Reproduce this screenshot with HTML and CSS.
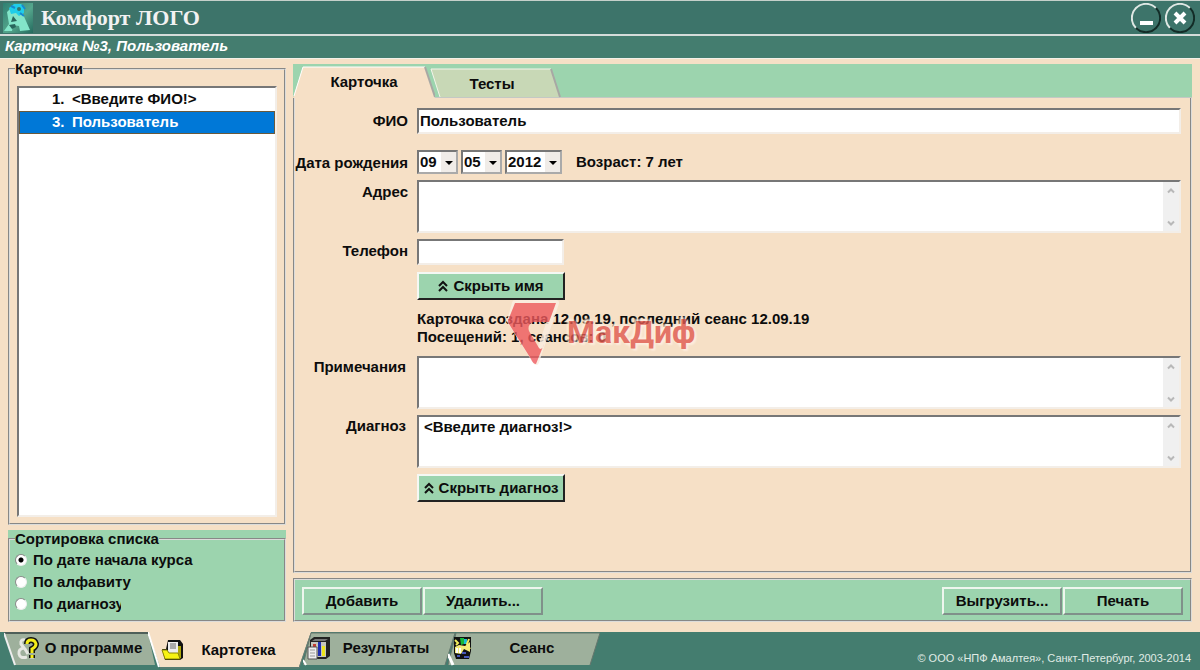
FILE: index.html
```html
<!DOCTYPE html>
<html lang="ru">
<head>
<meta charset="utf-8">
<title>Комфорт ЛОГО</title>
<link rel="stylesheet" href="styles.css">
</head>
<body>
<header class="titlebar">
  <svg class="app-logo" viewBox="0 0 30 30" aria-hidden="true">
    <defs><linearGradient id="lg" x1="0" y1="0" x2="1" y2="1"><stop offset="0" stop-color="#2f7f72"/><stop offset=".55" stop-color="#55a68c"/><stop offset="1" stop-color="#246a5e"/></linearGradient></defs>
    <rect width="30" height="30" fill="url(#lg)"/>
    <path d="M4 9 9 4 19 9 27 27 17 28 16 23 10 22 9 28 1 28 6 21Z" fill="#83e5c9"/>
    <path d="M10 13 14 18 8 19ZM6 22 12 21 13 24 9 26Z" fill="#28665c"/>
    <path d="M6 5 11 1 18 1 21 4 21 10 16 13 13 10 8 11Z" fill="#20cde9"/>
    <path d="M8 3 12 5M19 2 22 6M17 10 21 13" stroke="#1689cf" stroke-width="2" fill="none"/>
    <circle cx="16" cy="6" r="2" fill="#35776d"/>
  </svg>
  <h1 class="app-title">Комфорт ЛОГО</h1>
  <div class="window-controls">
    <button class="round" aria-label="Свернуть"><svg viewBox="0 0 30 30"><path d="M5 25A14 14 0 0 1 25 5" class="lit"/><path d="M25 5A14 14 0 0 1 5 25" class="shade"/><path d="M9 20H22" stroke="#fff" stroke-width="4"/></svg></button>
    <button class="round" aria-label="Закрыть"><svg viewBox="0 0 30 30"><path d="M5 25A14 14 0 0 1 25 5" class="lit"/><path d="M25 5A14 14 0 0 1 5 25" class="shade"/><path d="M10 10 20 20M20 10 10 20" stroke="#fff" stroke-width="4"/></svg></button>
  </div>
</header>
<div class="subtitle">Карточка №3, Пользователь</div>

<main class="workspace">
  <aside class="sidebar">
    <fieldset class="group cards">
      <legend>Карточки</legend>
      <ul class="card-list">
        <li><span class="num">1.</span>&lt;Введите ФИО!&gt;</li>
        <li class="selected"><span class="num">3.</span>Пользователь</li>
      </ul>
    </fieldset>
    <div class="sort-panel">
      <fieldset class="group sort">
        <legend>Сортировка списка</legend>
        <label><input type="radio" name="sort" checked><span>По дате начала курса</span></label>
        <label><input type="radio" name="sort"><span>По алфавиту</span></label>
        <label><input type="radio" name="sort"><span class="cut">По диагнозу</span></label>
      </fieldset>
    </div>
  </aside>

  <section class="content">
    <nav class="tabs">
      <button class="tab tab-current"><svg viewBox="0 0 142 34" preserveAspectRatio="none"><path d="M0 34 10 3H132L142 34Z" fill="#f6e0c6"/><path d="M1 32 10 3H132" fill="none" stroke="#fff" stroke-width="1"/><path d="M132 3 142 33" fill="none" stroke="#a8a8a4" stroke-width="2"/></svg><span>Карточка</span></button>
      <button class="tab tab-tests"><svg viewBox="0 0 132 34" preserveAspectRatio="none"><path d="M10 33 1 5H121L130 33Z" fill="#c8d8b6"/><path d="M10 33 1 5H121" fill="none" stroke="#f4f4ea" stroke-width="1"/><path d="M121 5 130 33" fill="none" stroke="#a8a8a4" stroke-width="2"/></svg><span>Тесты</span></button>
    </nav>
    <form class="card-form">
      <label class="caption mid" for="fio">ФИО</label>
      <input class="sunken" id="fio" value="Пользователь">

      <label class="caption mid" for="day">Дата рождения</label>
      <div class="birth">
        <span class="pick"><select id="day"><option>09</option></select><svg viewBox="0 0 15 20"><rect width="15" height="20" fill="#f0ece8"/><path d="M4 9H12L8 13Z"/></svg></span>
        <span class="pick"><select aria-label="Месяц"><option>05</option></select><svg viewBox="0 0 15 20"><rect width="15" height="20" fill="#f0ece8"/><path d="M4 9H12L8 13Z"/></svg></span>
        <span class="pick year"><select aria-label="Год"><option>2012</option></select><svg viewBox="0 0 15 20"><rect width="15" height="20" fill="#f0ece8"/><path d="M4 9H12L8 13Z"/></svg></span>
        <span class="age">Возраст: 7 лет</span>
      </div>

      <label class="caption" for="addr">Адрес</label>
      <div class="memo sunken"><textarea id="addr"></textarea><svg viewBox="0 0 16 48"><path d="M5 10 8 7 11 10M5 39 8 42 11 39"/></svg></div>

      <label class="caption" for="phone">Телефон</label>
      <input class="sunken phone" id="phone">

      <button type="button" class="raised"><svg viewBox="0 0 10 12"><path d="M1 6 5 2 9 6M1 11 5 7 9 11"/></svg>Скрыть имя</button>

      <p class="summary">Карточка создана 12.09.19, последний сеанс 12.09.19<br>Посещений: 1, сеансов: 0
        <span class="watermark"><svg viewBox="0 0 56 68"><path d="M8 5H49L29 64 3 23Z" fill="none" stroke="#fbeee2" stroke-width="6" stroke-linejoin="round"/><path d="M8 5H49L42 24H26Q20 27 22 33L32 50Q35 53 37 46L29 66Q26 66 24 61L2 26Q0 23 2 20Z" fill="#ee5a5e"/></svg><span>МакДиф</span></span>
      </p>

      <label class="caption inset" for="notes">Примечания</label>
      <div class="memo sunken"><textarea id="notes"></textarea><svg viewBox="0 0 16 48"><path d="M5 10 8 7 11 10M5 39 8 42 11 39"/></svg></div>

      <label class="caption inset" for="diag">Диагноз</label>
      <div class="memo sunken"><textarea id="diag">&lt;Введите диагноз!&gt;</textarea><svg viewBox="0 0 16 48"><path d="M5 10 8 7 11 10M5 39 8 42 11 39"/></svg></div>

      <button type="button" class="raised"><svg viewBox="0 0 10 12"><path d="M1 6 5 2 9 6M1 11 5 7 9 11"/></svg>Скрыть диагноз</button>
    </form>
    <div class="actions">
      <button class="flat">Добавить</button>
      <button class="flat">Удалить...</button>
      <span class="spacer"></span>
      <button class="flat">Выгрузить...</button>
      <button class="flat">Печать</button>
    </div>
  </section>
</main>

<footer class="bottom">
  <nav class="modes">
    <button class="mode about"><svg class="shape" viewBox="0 0 152 38" preserveAspectRatio="none"><path d="M0 1H144L151 33H11Z" fill="#9eb09c"/><path d="M0 1H144" stroke="#4f5f59" stroke-width="2"/><path d="M0 1 11 33" stroke="#eee" stroke-width="2"/></svg>
      <svg class="icon" viewBox="0 0 24 24"><path d="M9 4Q4 3 5 8L8 12Q2 13 3 18T11 21M9 13 12 18M14 21H18" stroke="#e6e8e2" stroke-width="3" fill="none"/><path d="M11 8Q11 4 15 4T20 8Q20 11 16 13V17M16 19V22" fill="none" stroke="#111" stroke-width="6"/><path d="M11 8Q11 4 15 4T20 8Q20 11 16 13V17M16 19V22" fill="none" stroke="#f4ee19" stroke-width="3"/></svg><span>О программе</span></button>
    <button class="mode files"><svg class="shape" viewBox="0 0 163 38" preserveAspectRatio="none"><path d="M0 0H163L151 35H12Z" fill="#f6e0c6"/><path d="M0 0 11 35" stroke="#fff" stroke-width="2"/><path d="M12 36H151L163 1" stroke="#6e7d74" stroke-width="1" fill="none"/></svg>
      <svg class="icon" viewBox="0 0 24 24"><path d="M8 2H20L23 6V20L20 22H5L2 11H6Z" fill="#111"/><path d="M8 4H18V15H8Z" fill="#eee"/><path d="M10 6H16M10 8H16M10 10H16" stroke="#666"/><path d="M18 8H21V20H18Z" fill="#ada70c"/><path d="M2 12H7L9 15H18L20 21H5Z" fill="#f7f313" stroke="#8c8705"/></svg><span>Картотека</span></button>
    <button class="mode results"><svg class="shape" viewBox="0 0 152 38" preserveAspectRatio="none"><path d="M8 1H152L142 33H0Z" fill="#9eb09c"/><path d="M0 33 8 1H152L142 33" stroke="#66766d" stroke-width="1" fill="none"/><path d="M0 28 3 33" stroke="#fff" stroke-width="2"/></svg>
      <svg class="icon" viewBox="0 0 24 24"><path d="M3 4 7 1H23V20L19 23H3Z" fill="#222"/><path d="M4 6H19V21H4Z" fill="#c6c6bd"/><path d="M5 5 8 3H21L18 5Z" fill="#777"/><path d="M11 6H14V20H11Z" fill="#202fb0"/><path d="M15 10H18V20H15Z" fill="#ece51b"/><path d="M6 8H9V12H6Z" fill="#c43b31"/><path d="M1 11H10V23H1Z" fill="#eee" stroke="#555"/><path d="M3 14H8M3 17H8M3 20H8" stroke="#999"/></svg><span>Результаты</span></button>
    <button class="mode session"><svg class="shape" viewBox="0 0 152 38" preserveAspectRatio="none"><path d="M8 1H152L142 33H0Z" fill="#9eb09c"/><path d="M0 33 8 1H152L142 33" stroke="#66766d" stroke-width="1" fill="none"/><path d="M0 22 5 33" stroke="#fff" stroke-width="3"/></svg>
      <svg class="icon" viewBox="0 0 24 24"><path d="M2 1H19V15L17 23H4L2 17Z" fill="#111"/><path d="M8 2H12V8L9 9Z" fill="#16b939"/><path d="M12 3H15V8H12Z" fill="#1dbfd0"/><path d="M3 4 6 7 4 9M17 3 15 8 18 13" stroke="#f1ed5c" stroke-width="2" fill="none"/><path d="M3 11 7 9 13 10 18 6V16L12 13 9 18 3 17Z" fill="#f3ec78"/><path d="M5 12V17M8 12V17" stroke="#fff" stroke-width="2"/><path d="M5 20H8M10 17H14M12 21H17" stroke="#4658b7" stroke-width="2"/></svg><span>Сеанс</span></button>
  </nav>
  <small class="copyright">© ООО «НПФ Амалтея», Санкт-Петербург, 2003-2014</small>
</footer>
</body>
</html>
```
FILE: styles.css
```css
* { box-sizing: border-box; }
body {
  margin: 0;
  min-height: 100vh;
  display: flex;
  flex-direction: column;
  background: #f6e0c6;
  color: #0c0c0c;
  font: bold 15px/18px "Liberation Sans", Arial, sans-serif;
}
button, input, select, textarea { font: inherit; color: inherit; border-radius: 0; margin: 0; }
button { cursor: pointer; }
svg { display: block; }

.titlebar {
  display: flex;
  align-items: center;
  height: 36px;
  padding: 0 5px 0 3px;
  background: #3d746a;
  border-top: 1px solid #c5d0ca;
  border-bottom: 2px solid #d5dcda;
}
.app-logo { width: 30px; height: 30px; }
.app-title {
  margin: 0 0 0 8px;
  color: #f2f2f2;
  font: bold 22px/30px "Liberation Serif", "Times New Roman", serif;
}
.window-controls { display: flex; gap: 4px; margin-left: auto; }
.round { width: 30px; height: 30px; padding: 0; border: 0; background: none; }
.round path { fill: none; }
.lit { stroke: #dfe8e4; stroke-width: 2; }
.shade { stroke: #132c27; stroke-width: 2; }
.subtitle {
  height: 23px;
  padding: 1px 5px;
  background: #447d6f;
  border-bottom: 1px solid #f4f0e8;
  color: #fff;
  font-style: italic;
}

.workspace { flex: 1; display: flex; gap: 7px; padding: 1px 8px 10px 8px; }
.sidebar { display: flex; flex-direction: column; gap: 5px; width: 278px; }
.group { margin: 0; border: 2px groove #dcdcda; min-width: 0; }
.group legend { margin: 0; padding: 0; }
.cards { flex: 1; display: flex; padding: 8px 7px 6px; }
.cards legend { margin-left: -2px; }
.card-list {
  flex: 1;
  margin: 0;
  padding: 0;
  list-style: none;
  background: #fff;
  border: 2px solid #f3eee8;
  border-top-color: #777;
  border-left-color: #777;
}
.card-list li { height: 23px; padding: 1px 0; line-height: 20px; display: flex; }
.num { width: 53px; padding-left: 33px; flex: none; }
.selected { background: #0078d7; color: #fff; outline: 1px solid #6a5a3c; outline-offset: -1px; }
.sort-panel { background: #9cd4ae; }
.sort { padding: 3px 5px 7px; display: grid; gap: 4px; }
.sort label { display: flex; align-items: center; gap: 6px; height: 18px; }
.sort input {
  appearance: none;
  width: 12px;
  height: 12px;
  border: 1px solid #8a8a8a;
  border-right-color: #eee;
  border-bottom-color: #eee;
  border-radius: 50%;
  background: #fff;
}
.sort input:checked { background: radial-gradient(circle, #000 0 2px, #fff 3px); }
.cut { width: 88px; overflow: hidden; white-space: nowrap; }

.content { flex: 1; min-width: 0; display: flex; flex-direction: column; margin-top: 4px; }
.tabs { display: flex; height: 34px; background: #9cd4ae; border-bottom: 1px solid #c4c8c4; }
.tab { position: relative; height: 34px; padding: 2px 0 0; border: 0; background: none; }
.tab svg { position: absolute; inset: 0; width: 100%; height: 100%; }
.tab span { position: relative; }
.tab-current { width: 142px; z-index: 1; }
.tab-tests { width: 132px; margin-left: -5px; padding: 5px 8px 0 0; }
.card-form {
  flex: 1;
  display: grid;
  grid-template-columns: 113px 1fr;
  column-gap: 9px;
  align-content: start;
  justify-items: start;
  padding: 10px 9px 60px 0;
  border: 2px groove #dcdcda;
  border-top: 0;
}
.card-form > * { margin-bottom: 6px; }
.caption { justify-self: end; padding-top: 3px; white-space: nowrap; }
.mid { padding-top: 4px; }
.inset { padding-right: 2px; padding-top: 2px; }
.sunken { background: #fff; border: 2px solid #f3eee8; border-top-color: #777; border-left-color: #777; }
input.sunken { width: 100%; height: 26px; padding: 0 1px 2px; }
#fio { margin-bottom: 16px; }
input.phone { width: 147px; margin-bottom: 7px; }
.birth { display: flex; gap: 3px; }
.pick { position: relative; width: 41px; height: 24px; }
.year { width: 57px; }
.pick select { appearance: none; width: 100%; height: 100%; padding: 0 1px; border: 2px solid #aaa; border-top-color: #777; border-left-color: #777; background: #fff; }
.pick svg { position: absolute; top: 2px; right: 2px; width: 15px; height: 20px; pointer-events: none; }
.age { margin-left: 11px; padding-top: 3px; }
.memo { display: flex; width: 100%; height: 53px; }
.memo textarea { flex: 1; min-width: 0; resize: none; border: 0; padding: 1px 5px; background: none; overflow: hidden; outline: 0; }
.memo svg { width: 16px; height: 49px; background: #f0f0f0; fill: none; stroke: #b8b8b8; stroke-width: 2; }
.raised {
  grid-column: 2;
  display: flex;
  align-items: center;
  justify-content: center;
  gap: 5px;
  width: 148px;
  height: 28px;
  padding: 0;
  white-space: nowrap;
  background: #9cd4ae;
  border: 2px solid #222;
  border-top-color: #f4f8f4;
  border-left-color: #f4f8f4;
}
.raised svg { width: 10px; height: 12px; fill: none; stroke: #111; stroke-width: 2; }
.summary { grid-column: 2; position: relative; margin: 4px 0 10px; }
.watermark { position: absolute; left: 90px; top: -12px; display: flex; align-items: center; gap: 4px; opacity: 0.8; pointer-events: none; }
.watermark svg { width: 56px; height: 68px; }
.watermark span {
  color: #e05a50;
  font: bold 32px/40px Roboto, sans-serif;
  text-shadow: 0 0 3px #fff0e4, 2px 2px 2px #fff0e4, -2px -2px 2px #fff0e4;
}

.actions {
  display: flex;
  gap: 1px;
  height: 44px;
  margin-top: 5px;
  padding: 7px 7px;
  background: #9cd4ae;
  border: 2px groove #dcdcda;
}
.spacer { flex: 1; }
.flat { width: 120px; height: 28px; padding: 0; background: #9cd4ae; border: 2px solid #80908a; border-top-color: #eef6ee; border-left-color: #eef6ee; }

.bottom { display: flex; justify-content: space-between; align-items: flex-start; height: 38px; background: #447d6f; }
.modes { display: flex; padding-left: 4px; }
.mode { position: relative; display: flex; align-items: center; height: 38px; padding: 0 0 6px; border: 0; background: none; }
.shape { position: absolute; inset: 0; width: 100%; height: 100%; }
.shape path:not([fill]) { fill: none; }
.icon { position: relative; width: 24px; height: 24px; flex: none; }
.mode span { position: relative; flex: 1; text-align: center; }
.about { width: 152px; padding-left: 12px; padding-right: 9px; }
.files { width: 163px; margin-left: -8px; padding-left: 12px; padding-right: 18px; padding-bottom: 2px; z-index: 1; }
.results { width: 152px; margin-left: -8px; padding-left: 4px; padding-right: 14px; }
.session { width: 152px; margin-left: -7px; padding-left: 4px; padding-right: 12px; }
.copyright { margin: 17px 9px 0 0; color: #e0ece6; font-size: 11px; font-weight: normal; }
```
